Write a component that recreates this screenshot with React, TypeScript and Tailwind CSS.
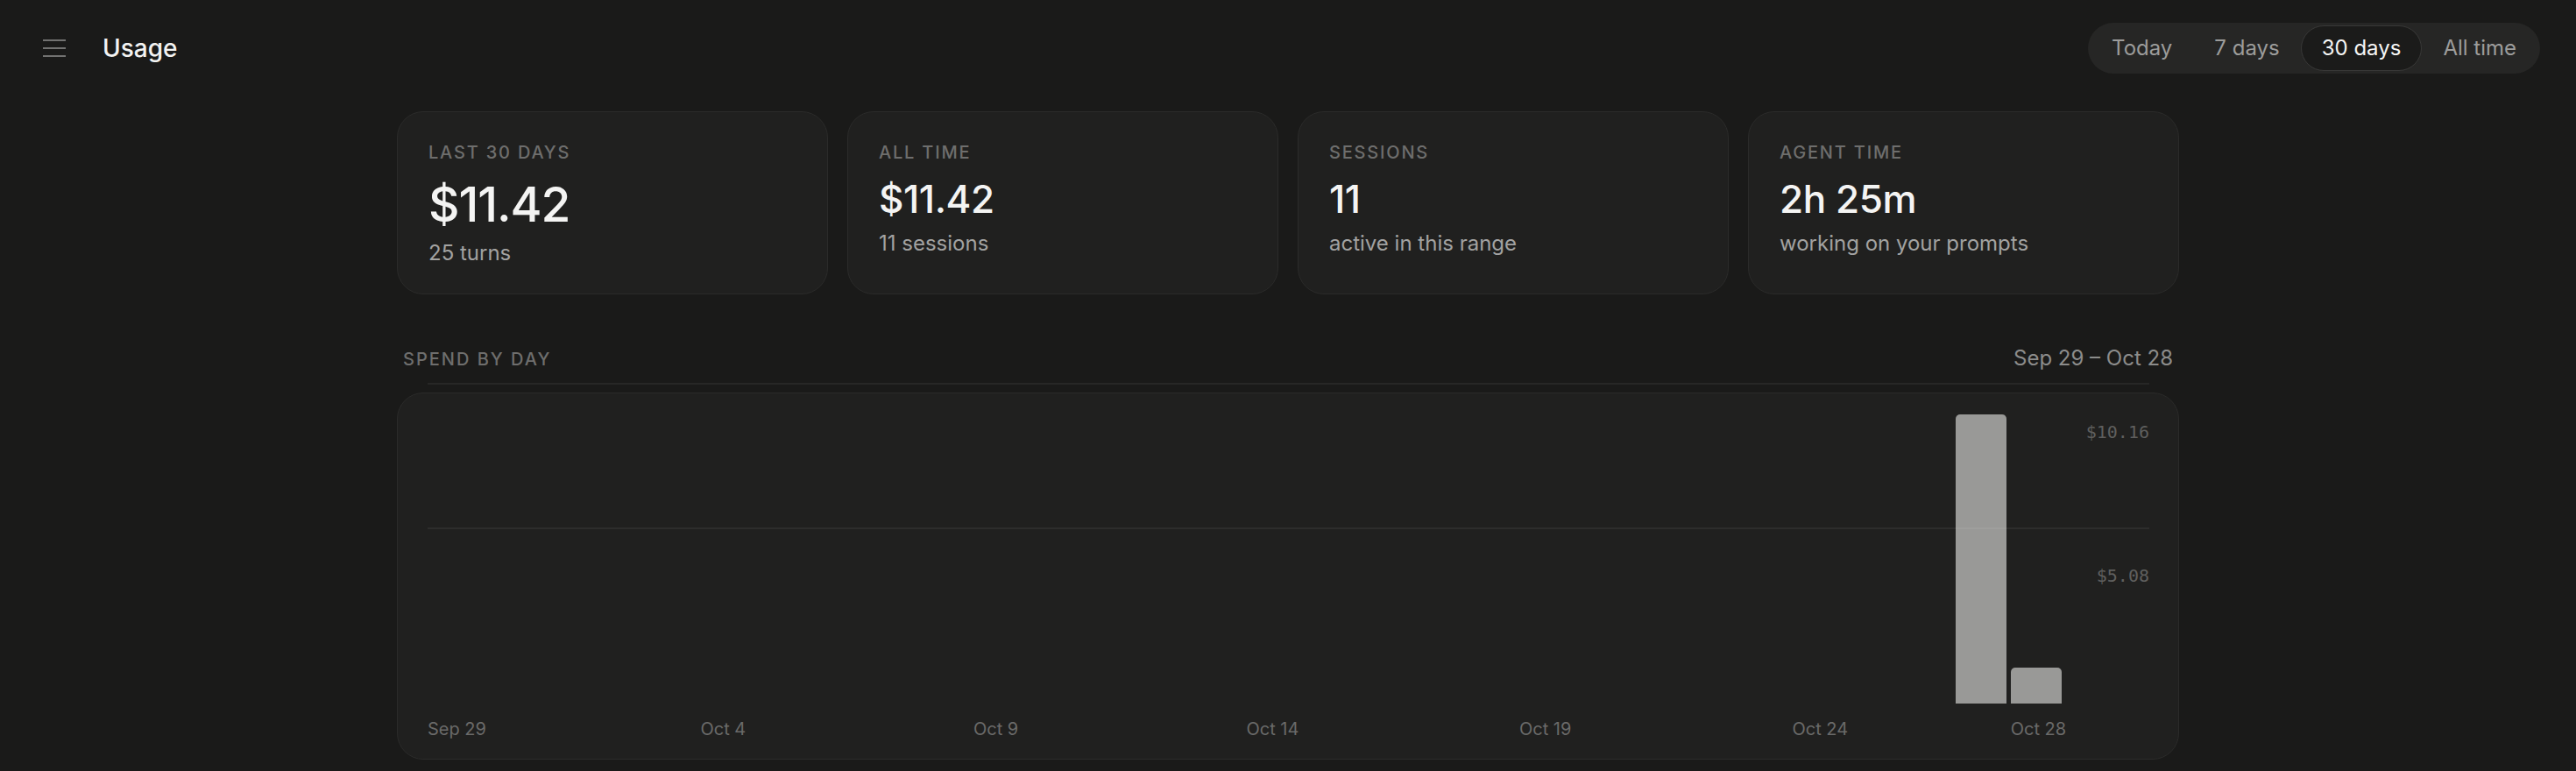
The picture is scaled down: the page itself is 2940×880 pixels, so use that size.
import { useState } from "react"

type Stat = {
    label: string
    value: string
    sub: string
    big?: boolean
}

const stats: Stat[] = [
    { label: "Last 30 days", value: "$11.42", sub: "25 turns", big: true },
    { label: "All time", value: "$11.42", sub: "11 sessions" },
    { label: "Sessions", value: "11", sub: "active in this range" },
    { label: "Agent time", value: "2h 25m", sub: "working on your prompts" },
]

const ranges = ["Today", "7 days", "30 days", "All time"]

// 30 jours, du 29 sept au 28 oct
const days = Array.from({ length: 30 }, (_, i) => {
    const label = i < 2 ? `Sep ${29 + i}` : `Oct ${i - 1}`
    let spend = 0
    if (i === 28) spend = 10.16
    if (i === 29) spend = 1.26
    return { label, spend }
})

const maxSpend = 10.16
const maxBar = 330
const tickIndexes = [0, 5, 10, 15, 20, 25, 29]

const MenuIcon = () => (
    <svg width="26" height="22" viewBox="0 0 26 22" fill="none">
        <path d="M0 2H26M0 11H26M0 20H26" stroke="#727271" strokeWidth="2.2" strokeLinecap="round" />
    </svg>
)

const StatCard: React.FC<{ stat: Stat }> = ({ stat }) => {
    return (
        <div className="rounded-[30px] border border-[#2b2b2a] bg-[#20201f] px-[35px] pt-[32px] pb-[30px]">
            <p className="text-[20px] leading-[28px] font-medium uppercase tracking-[0.09em] text-[#6e6e6d]">
                {stat.label}
            </p>
            {stat.big ? (
                <p className="mt-[15px] text-[55px] leading-[60px] font-medium tracking-[-0.02em] text-[#f4f4f3]">
                    {stat.value}
                </p>
            ) : (
                <p className="mt-[15px] text-[44px] leading-[48px] font-medium tracking-[-0.01em] text-[#f4f4f3]">
                    {stat.value}
                </p>
            )}
            <p className={`${stat.big ? "mt-[10px]" : "mt-[11px]"} text-[24px] leading-[32px] text-[#a2a2a1]`}>
                {stat.sub}
            </p>
        </div>
    )
}

const SpendChart = () => {
    return (
        <div className="relative mt-[22px] rounded-[30px] border border-[#2b2b2a] bg-[#20201f] pl-[34px] pr-[33px] pb-[20px]">
            {/* lignes de la grille */}
            <div className="absolute left-[34px] right-[33px] top-[-12px] z-10 h-[2px] bg-[#ffffff0f]" />
            <div className="absolute left-[34px] right-[33px] top-[153px] z-10 h-[2px] bg-[#ffffff0f]" />

            {/* axe Y */}
            <p className="absolute right-[33px] top-[30px] font-['DejaVu_Sans_Mono',monospace] text-[20px] leading-[28px] text-[#5f5f5e]">
                $10.16
            </p>
            <p className="absolute right-[33px] top-[194px] font-['DejaVu_Sans_Mono',monospace] text-[20px] leading-[28px] text-[#5f5f5e]">
                $5.08
            </p>

            <div className="grid h-[354px] w-[1869px] grid-cols-30 items-end">
                {days.map((d) => (
                    <div key={d.label} className="flex h-full items-end">
                        {d.spend > 0 && (
                            <div
                                className="w-[58px] rounded-t-[5px] bg-[#999997]"
                                style={{ height: `${Math.round((d.spend / maxSpend) * maxBar)}px` }}
                            />
                        )}
                    </div>
                ))}
            </div>
            <div className="mt-[15px] grid w-[1869px] grid-cols-30">
                {days.map((d, i) => (
                    <div key={d.label} className="h-[28px]">
                        {tickIndexes.includes(i) && (
                            <span className="whitespace-nowrap text-[20px] leading-[28px] text-[#6a6a69]">{d.label}</span>
                        )}
                    </div>
                ))}
            </div>
        </div>
    )
}

export default function App() {
    const [range, setRange] = useState("30 days")

    return (
        <div className="min-h-screen bg-[#1a1a19] pb-[14px] font-['Inter','Noto_Sans',sans-serif] text-[#f4f4f3]">
            <header className="flex items-center justify-between pt-[26px] pl-[49px] pr-[41px]">
                <div className="flex items-center gap-[42px]">
                    <button className="flex items-center">
                        <MenuIcon />
                    </button>
                    <h1 className="text-[28px] leading-[36px] font-medium text-[#f3f3f2]">Usage</h1>
                </div>
                <div className="flex rounded-full bg-[#262625] p-[3px]">
                    {ranges.map((r) =>
                        r === range ? (
                            <button
                                key={r}
                                onClick={() => setRange(r)}
                                className="h-[52px] rounded-full border-[1.5px] border-[#383837] bg-[#1b1b1a] px-[23px] text-[24px] text-[#f5f5f4]"
                            >
                                {r}
                            </button>
                        ) : (
                            <button
                                key={r}
                                onClick={() => setRange(r)}
                                className="h-[52px] rounded-full border-[1.5px] border-transparent px-[23px] text-[24px] text-[#9c9c9b]"
                            >
                                {r}
                            </button>
                        )
                    )}
                </div>
            </header>

            <main className="mx-auto mt-[43px] w-[2034px]">
                <div className="grid grid-cols-4 gap-[22px]">
                    {stats.map((s) => (
                        <StatCard key={s.label} stat={s} />
                    ))}
                </div>

                <div className="mt-[57px] flex items-baseline justify-between px-[7px]">
                    <p className="text-[20px] leading-[32px] font-medium uppercase tracking-[0.1em] text-[#6e6e6d]">
                        Spend by day
                    </p>
                    <p className="text-[24px] leading-[32px] text-[#8c8c8b]">Sep 29 – Oct 28</p>
                </div>

                <SpendChart />
            </main>
        </div>
    )
}
